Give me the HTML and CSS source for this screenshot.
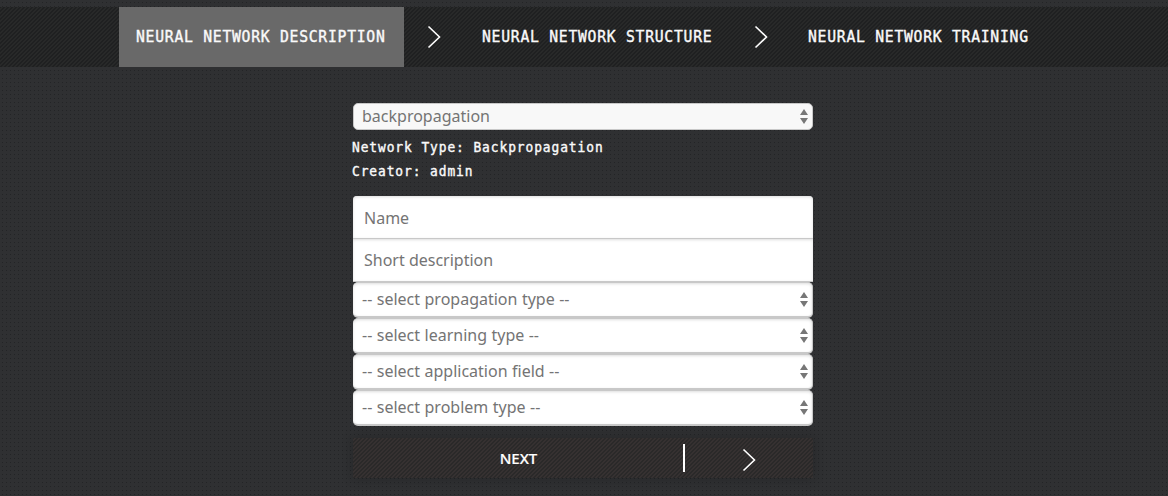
FILE: index.html
```html
<!DOCTYPE html>
<html lang="en">
<head>
<meta charset="utf-8">
<title>Neural Network Description</title>
<link rel="stylesheet" href="styles.css">
</head>
<body>
<nav class="steps">
  <a class="step step-active"><span class="step-label">NEURAL NETWORK DESCRIPTION</span></a>
  <svg class="chevron" viewBox="0 0 14 24"><path d="M1.5 1.5 12.5 12 1.5 22.5"/></svg>
  <a class="step step-structure"><span class="step-label">NEURAL NETWORK STRUCTURE</span></a>
  <svg class="chevron" viewBox="0 0 14 24"><path d="M1.5 1.5 12.5 12 1.5 22.5"/></svg>
  <a class="step step-training"><span class="step-label">NEURAL NETWORK TRAINING</span></a>
</nav>
<main class="form">
  <div class="select template"><span>backpropagation</span><svg class="arrows" viewBox="0 0 8 15"><path d="M0 6 4 0 8 6ZM0 9h8L4 15Z"/></svg></div>
  <div class="info"><p>Network Type: Backpropagation</p><p>Creator: admin</p></div>
  <div class="fields">
    <input class="field" placeholder="Name">
    <input class="field field-last" placeholder="Short description">
    <div class="select"><span>-- select propagation type --</span><svg class="arrows" viewBox="0 0 8 15"><path d="M0 6 4 0 8 6ZM0 9h8L4 15Z"/></svg></div>
    <div class="select"><span>-- select learning type --</span><svg class="arrows" viewBox="0 0 8 15"><path d="M0 6 4 0 8 6ZM0 9h8L4 15Z"/></svg></div>
    <div class="select"><span>-- select application field --</span><svg class="arrows" viewBox="0 0 8 15"><path d="M0 6 4 0 8 6ZM0 9h8L4 15Z"/></svg></div>
    <div class="select"><span>-- select problem type --</span><svg class="arrows" viewBox="0 0 8 15"><path d="M0 6 4 0 8 6ZM0 9h8L4 15Z"/></svg></div>
  </div>
  <button class="next"><span class="next-label">NEXT</span><span class="next-icon"><svg class="chevron" viewBox="0 0 14 24"><path d="M1.5 1.5 12.5 12 1.5 22.5"/></svg></span></button>
</main>
</body>
</html>
```
FILE: styles.css
```css
* { box-sizing: border-box; }
body {
  margin: 0;
  padding-top: 7px;
  height: 496px;
  overflow: hidden;
  font: 16px/22px "Noto Sans", sans-serif;
  background: radial-gradient(circle at 2.5px 2.5px, #232426 0 .7px, transparent .8px) 0 0 / 4px 4px, #2f3032;
}
.steps {
  display: flex;
  align-items: center;
  height: 60px;
  padding-left: 119px;
  background: repeating-linear-gradient(135deg, #1f2021 0 1.414px, #282929 1.414px 2.828px);
}
.step {
  flex: none;
  height: 60px;
  padding-left: 17px;
  color: #fafafa;
  font: 16px/59px "DejaVu Sans Mono", monospace;
  letter-spacing: .8px;
  white-space: pre;
  -webkit-text-stroke: .4px #fafafa;
}
.step-label {
  display: inline-block;
  transform: scaleX(.92);
  transform-origin: left;
}
.step-active { width: 285px; background: #696969; }
.step-structure { width: 266px; }
.step-training { width: 255px; padding-left: 16px; }
.chevron {
  width: 14px;
  height: 24px;
  margin: 0 24px 0 23px;
  flex: none;
  fill: none;
  stroke: #fff;
  stroke-width: 1.6;
}
.form { width: 460px; margin: 36px 0 0 353px; }
.select {
  display: flex;
  align-items: center;
  justify-content: space-between;
  height: 36px;
  padding: 0 4px 2px 9px;
  color: #747474;
  word-spacing: .3px;
  background: #fff;
  border: 1px solid #c8c8c8;
  border-width: 1px 1px 2px 0;
  border-radius: 5px;
  box-shadow: inset 0 1px 3px #ddd;
}
.template {
  height: 27px;
  padding-bottom: 1px;
  background: #f8f8f8;
  border-width: 1px;
  padding-left: 8px;
  padding-right: 4px;
  box-shadow: none;
}
.arrows { width: 8px; height: 15px; margin-top: 2px; fill: #777; }
.template .arrows { margin-top: 1px; }
.info {
  margin: 5px 0 13px -1px;
  color: #fafafa;
  font: 14px/24px "DejaVu Sans Mono", monospace;
  letter-spacing: 1px;
  white-space: nowrap;
  -webkit-text-stroke: .4px #fafafa;
}
.info p { margin: 0; transform: scaleX(.92); transform-origin: left; }
.fields { display: flex; flex-direction: column; }
.field {
  height: 43px;
  padding: 1px 11px 0;
  font: 16px/22px "Noto Sans", sans-serif;
  background: #fff;
  border: 0;
  border-bottom: 1px solid #c8c8c8;
  border-radius: 4px 4px 0 0;
  box-shadow: inset 0 1px 3px #ddd;
}
.field::placeholder { color: #747474; }
.field-last { padding: 0 11px 1px; border-radius: 0; }
.next {
  display: flex;
  align-items: center;
  width: 460px;
  height: 40px;
  margin-top: 12px;
  padding: 0;
  color: #fff;
  border: 0;
  background: repeating-linear-gradient(135deg, #2a2929 0 1.414px, #363131 1.414px 2.828px);
  box-shadow: 0 0 10px rgba(20, 20, 20, .3);
  font: 500 15px/20px "Noto Sans", sans-serif;
  -webkit-text-stroke: .2px #fff;
}
.next-label { width: 332px; height: 28px; padding-left: 1px; line-height: 28px; border-right: 2px solid #fff; }
.next-icon { flex: 1; display: flex; justify-content: center; }
.next-icon .chevron { margin: 3px 0 0; }
```
